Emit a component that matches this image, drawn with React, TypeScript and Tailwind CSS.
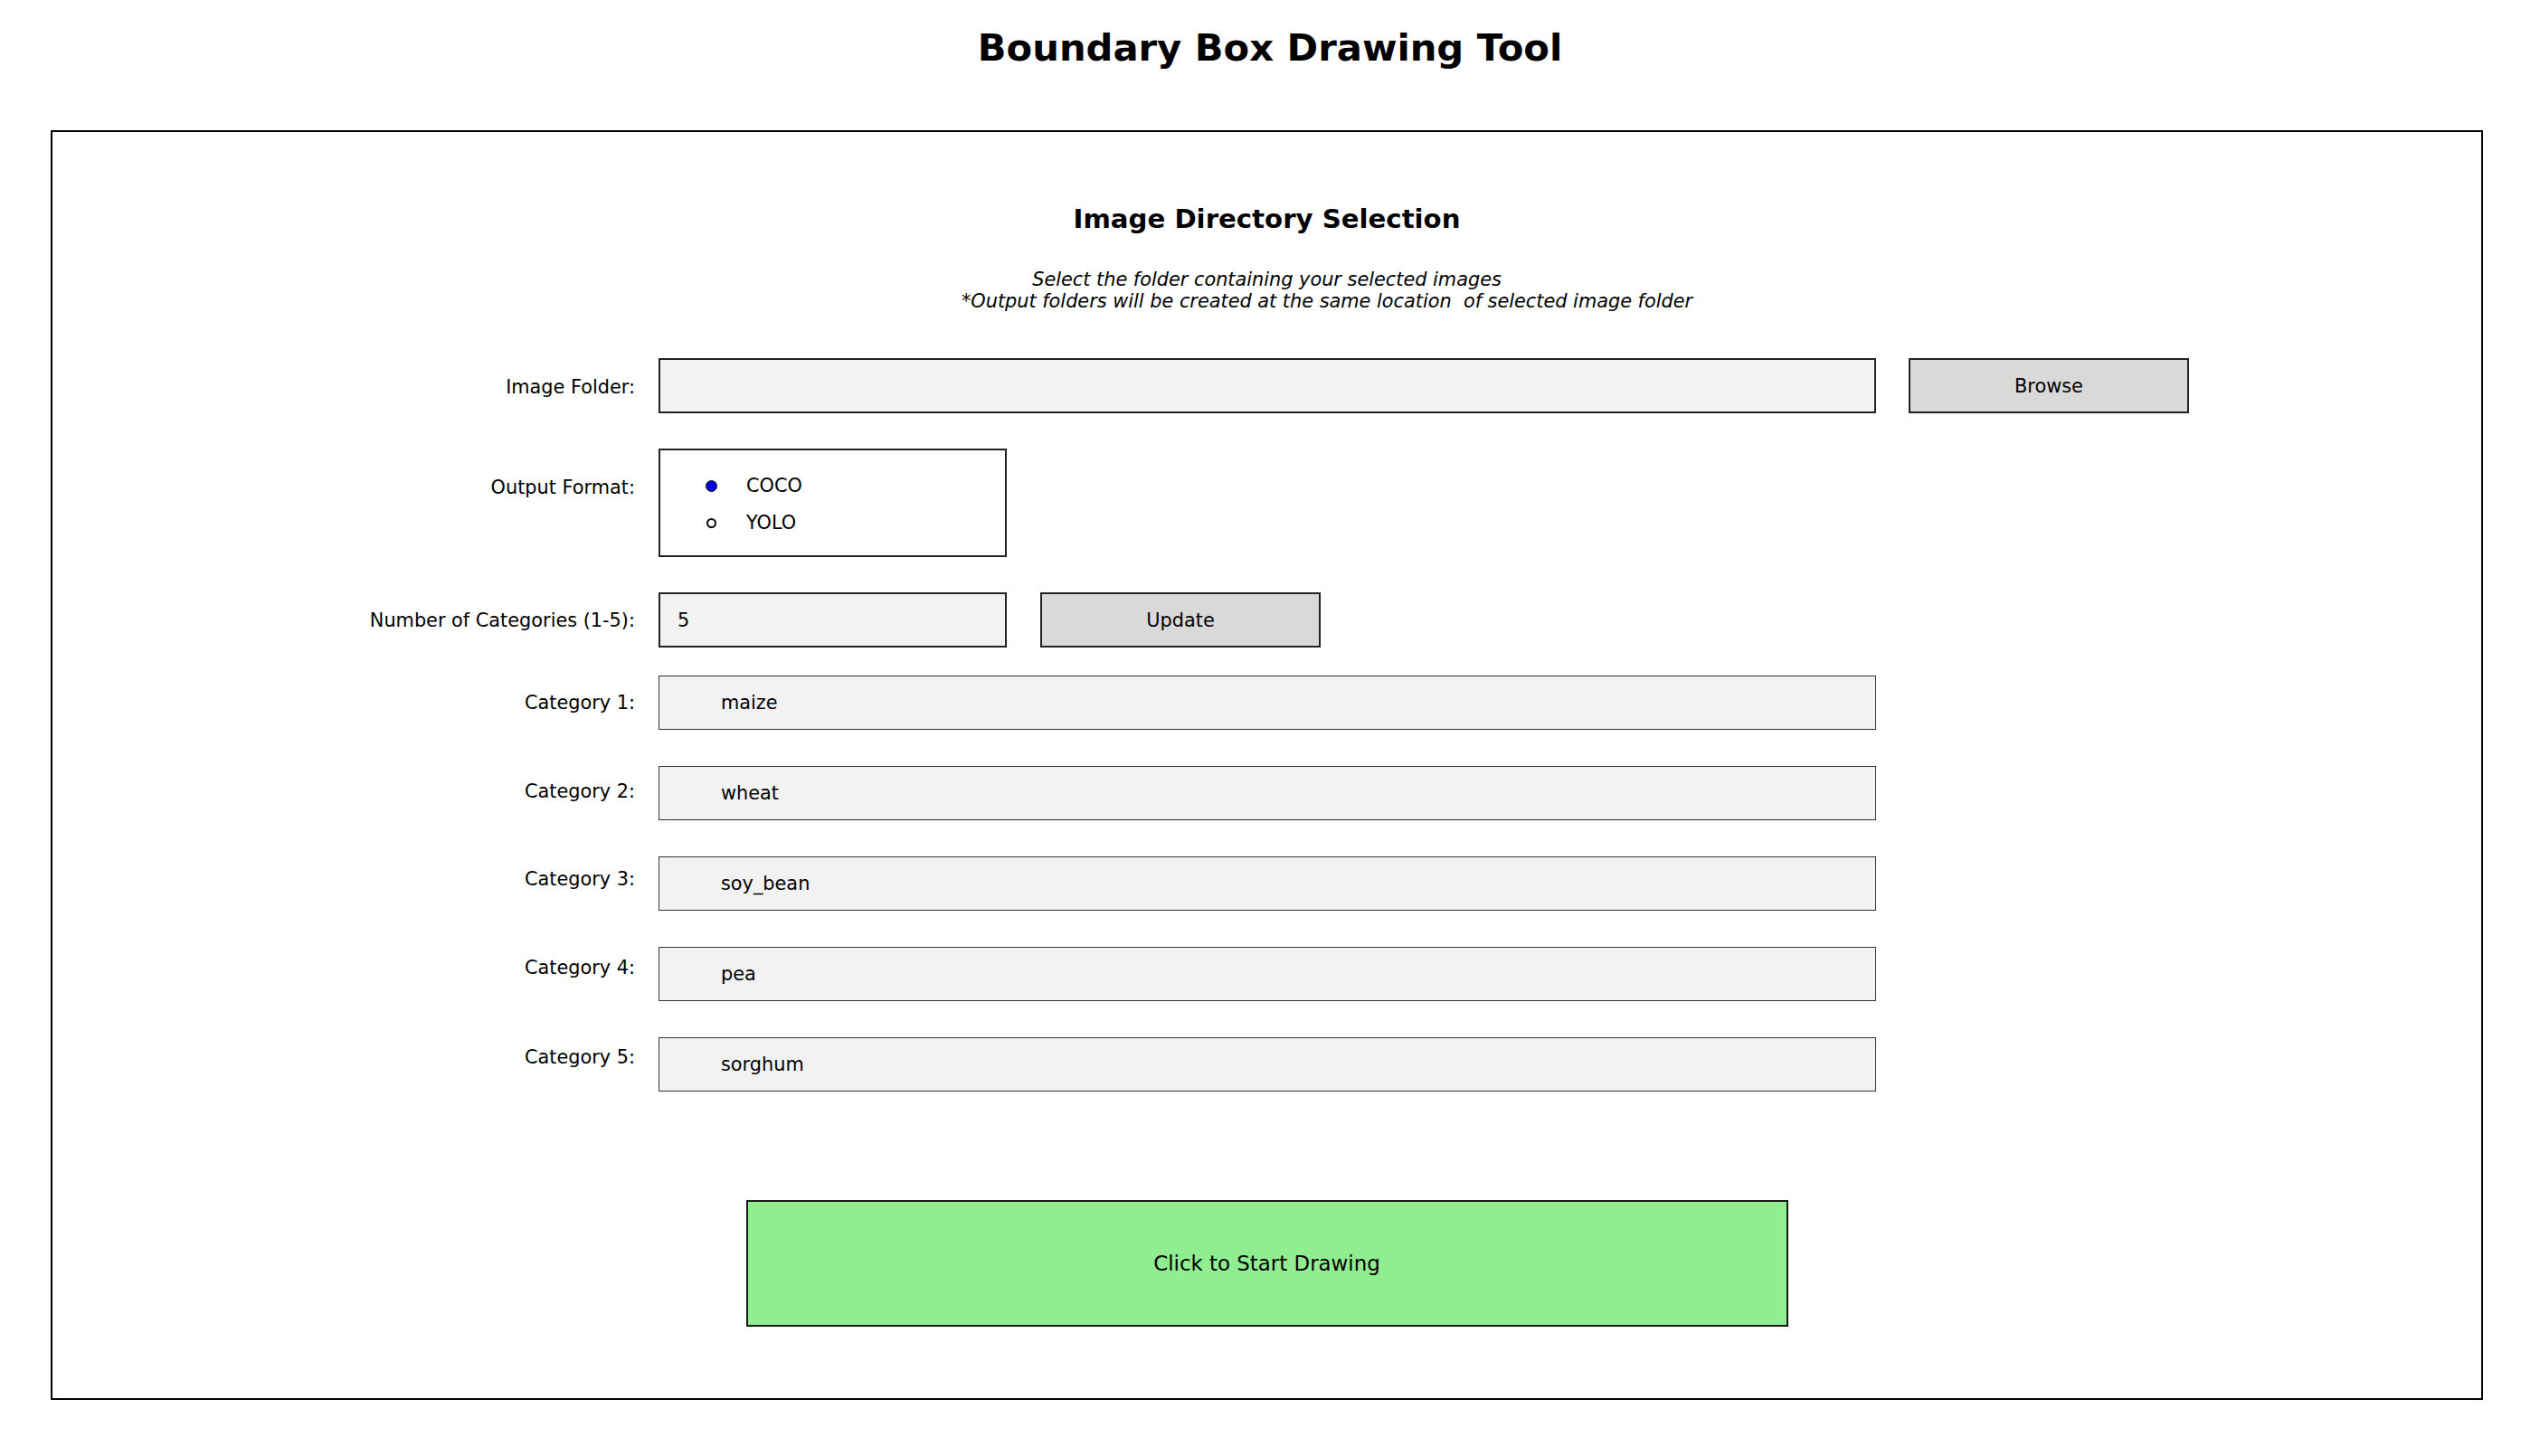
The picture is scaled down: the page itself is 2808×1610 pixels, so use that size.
const categories = ["maize", "wheat", "soy_bean", "pea", "sorghum"];

// the labels in the original sit a little higher on each lower row
const labelPad = ["pt-[18px]", "pt-[16px]", "pt-[13px]", "pt-[11px]", "pt-[10px]"];

function Label({ text, pad }: { text: string; pad: string }) {
  return (
    <div className={`w-[644px] shrink-0 text-right leading-[24px] ${pad}`}>{text}</div>
  );
}

export default function App() {
  return (
    <div className="w-[2808px] h-[1610px] bg-white text-black font-['DejaVu_Sans',sans-serif] text-[20.83px]">
      <h1 className="h-[144px] pt-[32px] text-center text-[41.7px] font-bold leading-none">
        Boundary Box Drawing Tool
      </h1>

      <div className="ml-[56px] w-[2689px] h-[1404px] border-2 border-black flex flex-col">
        <h2 className="mt-[82px] text-center text-[29.2px] font-bold leading-none">
          Image Directory Selection
        </h2>
        <div className="mt-[40px] italic leading-[24px] text-center">
          <p>Select the folder containing your selected images</p>
          <p className="pl-[133px]">*Output folders will be created at the same location&nbsp; of selected image folder</p>
        </div>

        {/* image folder */}
        <div className="mt-[51px] flex h-[61px]">
          <Label text="Image Folder:" pad="pt-[20px]" />
          <div className="ml-[26px] w-[1346px] h-[61px] bg-[#f2f2f2] border-2 border-[#222]" />
          <button className="ml-[36px] w-[310px] h-[61px] pt-[2px] bg-[#d9d9d9] border-2 border-[#222] flex items-center justify-center">
            Browse
          </button>
        </div>

        {/* output format */}
        <div className="mt-[39px] flex h-[120px]">
          <Label text="Output Format:" pad="pt-[31px]" />
          <div className="ml-[26px] w-[385px] h-[120px] border-2 border-[#222] bg-white flex flex-col gap-[17px] pt-[27px] pl-[50px]">
            <div className="flex items-center h-[24px]">
              <div className="w-[13px] flex justify-center">
                <span className="block w-[13px] h-[13px] rounded-full bg-[#0000d8] border-[1.5px] border-[#111]" />
              </div>
              <span className="ml-[32px]">COCO</span>
            </div>
            <div className="flex items-center h-[24px]">
              <div className="w-[13px] flex justify-center">
                <span className="block w-[11px] h-[11px] rounded-full bg-white border-2 border-black" />
              </div>
              <span className="ml-[32px]">YOLO</span>
            </div>
          </div>
        </div>

        {/* number of categories */}
        <div className="mt-[39px] flex h-[61px]">
          <Label text="Number of Categories (1-5):" pad="pt-[19px]" />
          <div className="ml-[26px] w-[385px] h-[61px] pt-[2px] bg-[#f2f2f2] border-2 border-[#222] flex items-center pl-[19px]">
            5
          </div>
          <button className="ml-[37px] w-[310px] h-[61px] pt-[2px] bg-[#d9d9d9] border-2 border-[#222] flex items-center justify-center">
            Update
          </button>
        </div>

        <div className="mt-[31px] flex flex-col gap-[40px]">
          {categories.map((c, i) => (
            <div key={c} className="flex h-[60px]">
              <Label text={`Category ${i + 1}:`} pad={labelPad[i]} />
              <div className="ml-[26px] w-[1346px] h-[60px] bg-[#f2f2f2] border border-[#333] flex items-center pl-[68px]">
                {c}
              </div>
            </div>
          ))}
        </div>

        <button className="mt-[120px] mx-auto w-[1152px] h-[140px] bg-[#90ee90] border-2 border-[#1a1a1a] flex items-center justify-center text-[22.9px]">
          Click to Start Drawing
        </button>
      </div>
    </div>
  );
}
